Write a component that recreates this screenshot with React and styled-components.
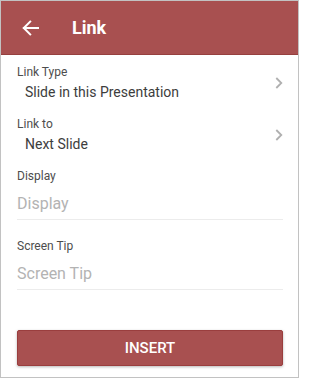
import React from "react";
import styled, { createGlobalStyle } from "styled-components";

const Global = createGlobalStyle`
  html, body { margin: 0; padding: 0; background: #ffffff; }
  body { font-family: Roboto, "Liberation Sans", Arial, sans-serif; }
  * { box-sizing: border-box; }
`;

const Frame = styled.div`
  width: 299px;
  height: 378px;
  border: 1px solid #c2c2c2;
  background: #ffffff;
  display: flex;
  flex-direction: column;
`;

const Header = styled.header`
  height: 54px;
  flex: none;
  background: #a85050;
  border-bottom: 1px solid #96403f;
  display: flex;
  align-items: center;
  padding-left: 20px;
`;

const BackButton = styled.button`
  width: 18px;
  height: 18px;
  padding: 0;
  border: none;
  background: transparent;
  display: flex;
  align-items: center;
  justify-content: center;
  margin-right: 33px;
  cursor: pointer;
`;

const Title = styled.h1`
  margin: 0;
  color: #ffffff;
  font-size: 18px;
  font-weight: 700;
  line-height: 22px;
`;

const Content = styled.div`
  flex: 1;
  display: flex;
  flex-direction: column;
  padding: 0 15px 0 16px;
`;

const NavRow = styled.div`
  display: flex;
  align-items: center;
  padding: 9px 0 6px;
`;

const NavText = styled.div`
  flex: 1;
  display: flex;
  flex-direction: column;
  gap: 3px;
`;

const Label = styled.div`
  font-size: 12px;
  line-height: 16px;
  color: #4d4d4d;
`;

const Value = styled.div`
  font-size: 14px;
  line-height: 18px;
  color: #3d3d3d;
  padding-left: 8px;
`;

const Field = styled.div`
  display: flex;
  flex-direction: column;
  padding-top: 9px;
  margin-bottom: ${(p) => p.$gapAfter || 0}px;
`;

const Input = styled.input`
  border: none;
  border-bottom: 1px solid #ececec;
  outline: none;
  padding: 9px 0 6px;
  font-family: Roboto, "Liberation Sans", Arial, sans-serif;
  font-size: 16px;
  line-height: 20px;
  height: 36px;
  color: #333;
  background: transparent;
  &::placeholder { color: #b3b3b3; }
`;

const InsertButton = styled.button`
  margin-top: 40px;
  height: 36px;
  width: 100%;
  border: 1px solid #9a3e3e;
  border-radius: 2px;
  background: #a85050;
  color: #ffffff;
  font-family: Roboto, "Liberation Sans", Arial, sans-serif;
  font-size: 15px;
  font-weight: 500;
  letter-spacing: 0;
  box-shadow: 0 1px 3px rgba(0, 0, 0, 0.28);
  cursor: pointer;
`;

const ArrowLeft = () => (
  <svg width="17" height="16" viewBox="0 0 17 16" fill="none">
    <path d="M16 8H1.8M8.2 1.6L1.8 8l6.4 6.4" stroke="#ffffff" strokeWidth="2" strokeLinecap="square" />
  </svg>
);

const Chevron = () => (
  <svg width="8" height="12" viewBox="0 0 8 12" fill="none">
    <path d="M1.3 1L6.3 6l-5 5" stroke="#b0b0b0" strokeWidth="1.8" />
  </svg>
);

const NavItem = ({ label, value }) => (
  <NavRow>
    <NavText>
      <Label>{label}</Label>
      <Value>{value}</Value>
    </NavText>
    <Chevron />
  </NavRow>
);

export default function App() {
  return (
    <>
      <Global />
      <Frame>
        <Header>
          <BackButton aria-label="Back">
            <ArrowLeft />
          </BackButton>
          <Title>Link</Title>
        </Header>
        <Content>
          <NavItem label="Link Type" value="Slide in this Presentation" />
          <NavItem label="Link to" value="Next Slide" />
          <Field $gapAfter={9}>
            <Label>Display</Label>
            <Input placeholder="Display" />
          </Field>
          <Field>
            <Label>Screen Tip</Label>
            <Input placeholder="Screen Tip" />
          </Field>
          <InsertButton>INSERT</InsertButton>
        </Content>
      </Frame>
    </>
  );
}
